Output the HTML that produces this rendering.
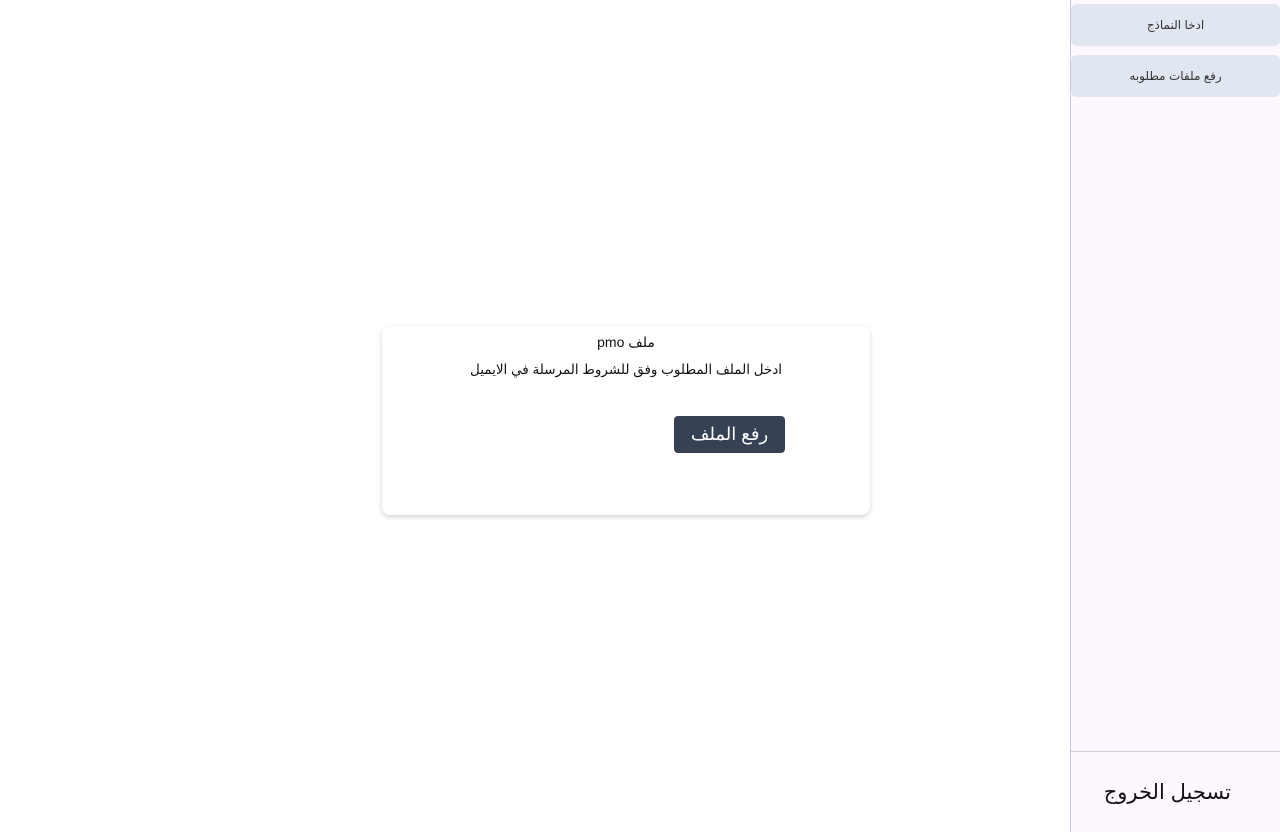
<!DOCTYPE html>
<html><head><meta charset="utf-8"><style>
body{margin:0;width:1280px;height:832px;background:#fff;font-family:"Liberation Sans","DejaVu Sans",sans-serif;position:relative;overflow:hidden}
.side{position:absolute;left:1070px;top:0;width:210px;height:832px;background:#fdf7ff;border-left:1px solid #cfc6d6}
.btn{position:absolute;left:0;width:209px;height:42px;background:#e0e7f0;border-radius:6px;font-size:12px;color:#333;display:flex;align-items:center;justify-content:center;direction:rtl}
.foot{position:absolute;left:0;top:751px;width:210px;border-top:1px solid #cfc6d6;height:81px}
.logout{position:absolute;right:50px;top:28px;font-size:21px;color:#111;direction:rtl}
.card{position:absolute;left:382px;top:326px;width:488px;height:189px;background:#fff;border-radius:8px;box-shadow:0 2px 5px rgba(0,0,0,.18)}
.t1{position:absolute;top:8px;width:100%;text-align:center;font-size:14px;direction:rtl;color:#111}
.t2{position:absolute;top:36px;width:100%;text-align:center;font-size:13.5px;direction:rtl;color:#111}
.up{position:absolute;left:292px;top:90px;width:111px;height:37px;background:#364153;border-radius:4px;color:#fff;font-size:18px;display:flex;align-items:center;justify-content:center;direction:rtl}
</style></head><body>
<div class="card">
<div class="t1">ملف pmo</div>
<div class="t2">ادخل الملف المطلوب وفق للشروط المرسلة في الايميل</div>
<div class="up">رفع الملف</div>
</div>
<div class="side">
<div class="btn" style="top:4px">ادخا النماذج</div>
<div class="btn" style="top:55px">رفع ملفات مطلوبه</div>
<div class="foot"><div class="logout">تسجيل الخروج</div></div>
</div>
</body></html>
